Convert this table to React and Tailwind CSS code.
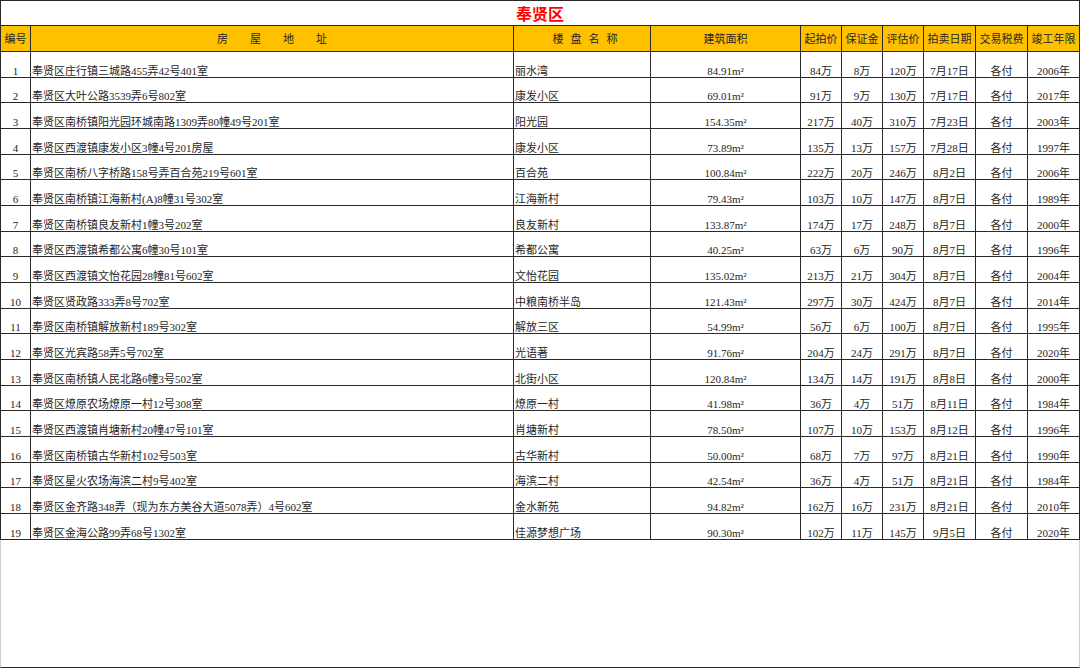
import React from 'react';

const rows = [
    ['1', '奉贤区庄行镇三城路455弄42号401室', '丽水湾', '84.91', '84万', '8万', '120万', '7月17日', '2006年'],
    ['2', '奉贤区大叶公路3539弄6号802室', '康发小区', '69.01', '91万', '9万', '130万', '7月17日', '2017年'],
    ['3', '奉贤区南桥镇阳光园环城南路1309弄80幢49号201室', '阳光园', '154.35', '217万', '40万', '310万', '7月23日', '2003年'],
    ['4', '奉贤区西渡镇康发小区3幢4号201房屋', '康发小区', '73.89', '135万', '13万', '157万', '7月28日', '1997年'],
    ['5', '奉贤区南桥八字桥路158号弄百合苑219号601室', '百合苑', '100.84', '222万', '20万', '246万', '8月2日', '2006年'],
    ['6', '奉贤区南桥镇江海新村(A)8幢31号302室', '江海新村', '79.43', '103万', '10万', '147万', '8月7日', '1989年'],
    ['7', '奉贤区南桥镇良友新村1幢3号202室', '良友新村', '133.87', '174万', '17万', '248万', '8月7日', '2000年'],
    ['8', '奉贤区西渡镇希都公寓6幢30号101室', '希都公寓', '40.25', '63万', '6万', '90万', '8月7日', '1996年'],
    ['9', '奉贤区西渡镇文怡花园28幢81号602室', '文怡花园', '135.02', '213万', '21万', '304万', '8月7日', '2004年'],
    ['10', '奉贤区贤政路333弄8号702室', '中粮南桥半岛', '121.43', '297万', '30万', '424万', '8月7日', '2014年'],
    ['11', '奉贤区南桥镇解放新村189号302室', '解放三区', '54.99', '56万', '6万', '100万', '8月7日', '1995年'],
    ['12', '奉贤区光宾路58弄5号702室', '光语著', '91.76', '204万', '24万', '291万', '8月7日', '2020年'],
    ['13', '奉贤区南桥镇人民北路6幢3号502室', '北街小区', '120.84', '134万', '14万', '191万', '8月8日', '2000年'],
    ['14', '奉贤区燎原农场燎原一村12号308室', '燎原一村', '41.98', '36万', '4万', '51万', '8月11日', '1984年'],
    ['15', '奉贤区西渡镇肖塘新村20幢47号101室', '肖塘新村', '78.50', '107万', '10万', '153万', '8月12日', '1996年'],
    ['16', '奉贤区南桥镇古华新村102号503室', '古华新村', '50.00', '68万', '7万', '97万', '8月21日', '1990年'],
    ['17', '奉贤区星火农场海滨二村9号402室', '海滨二村', '42.54', '36万', '4万', '51万', '8月21日', '1984年'],
    ['18', '奉贤区金齐路348弄（现为东方美谷大道5078弄）4号602室', '金水新苑', '94.82', '162万', '16万', '231万', '8月21日', '2010年'],
    ['19', '奉贤区金海公路99弄68号1302室', '佳源梦想广场', '90.30', '102万', '11万', '145万', '9月5日', '2020年'],
];

const cell = 'border-r border-b border-[#2a2a2a] flex items-end h-[25.68px] leading-[12px] whitespace-nowrap overflow-hidden';
const head = 'border-r border-b border-[#2a2a2a] bg-[#ffc000] flex items-center justify-center pt-[2px] h-[26px] whitespace-nowrap';

export default function App() {
    return (
        <div className="w-[1080px] h-[668px] flex flex-col bg-white text-[11px] text-[#262626]" style={{ fontFamily: '"Liberation Serif", "Noto Sans CJK SC", serif' }}>
            <div className="grid grid-cols-[30px_483px_137px_150px_41px_41px_41px_52px_52px_52px] border-l border-t border-[#2a2a2a]">
                {/* Title */}
                <div className="col-span-10 h-[25px] border-r border-b border-[#2a2a2a] flex items-center justify-center">
                    <span className="text-[16px] font-bold text-[#ff0000] leading-none" style={{ fontFamily: '"Noto Sans CJK SC", sans-serif' }}>奉贤区</span>
                </div>

                {/* Header */}
                <div className={head}>编号</div>
                <div className={head}>
                    <div className="flex gap-[22px]">
                        <span>房</span><span>屋</span><span>地</span><span>址</span>
                    </div>
                </div>
                <div className={head}>
                    <div className="flex gap-[7px] pl-[6px]">
                        <span>楼</span><span>盘</span><span>名</span><span>称</span>
                    </div>
                </div>
                <div className={head}>建筑面积</div>
                <div className={head}>起拍价</div>
                <div className={head}>保证金</div>
                <div className={head}>评估价</div>
                <div className={head}>拍卖日期</div>
                <div className={head}>交易税费</div>
                <div className={head}>竣工年限</div>

                {/* Rows */}
                {rows.map((r) => (
                    <React.Fragment key={r[0]}>
                        <div className={`${cell} justify-center`}>{r[0]}</div>
                        <div className={`${cell} pl-[1px]`}>{r[1]}</div>
                        <div className={`${cell} pl-[1px]`}>{r[2]}</div>
                        <div className={`${cell} justify-center`}>{r[3]}m²</div>
                        <div className={`${cell} justify-center`}>{r[4]}</div>
                        <div className={`${cell} justify-center`}>{r[5]}</div>
                        <div className={`${cell} justify-center`}>{r[6]}</div>
                        <div className={`${cell} justify-center`}>{r[7]}</div>
                        <div className={`${cell} justify-center`}>各付</div>
                        <div className={`${cell} justify-center`}>{r[8]}</div>
                    </React.Fragment>
                ))}
            </div>
            <div className="flex-1 border-l border-r border-[#cfcfcf] border-b border-b-[#2a2a2a]" />
        </div>
    );
}
